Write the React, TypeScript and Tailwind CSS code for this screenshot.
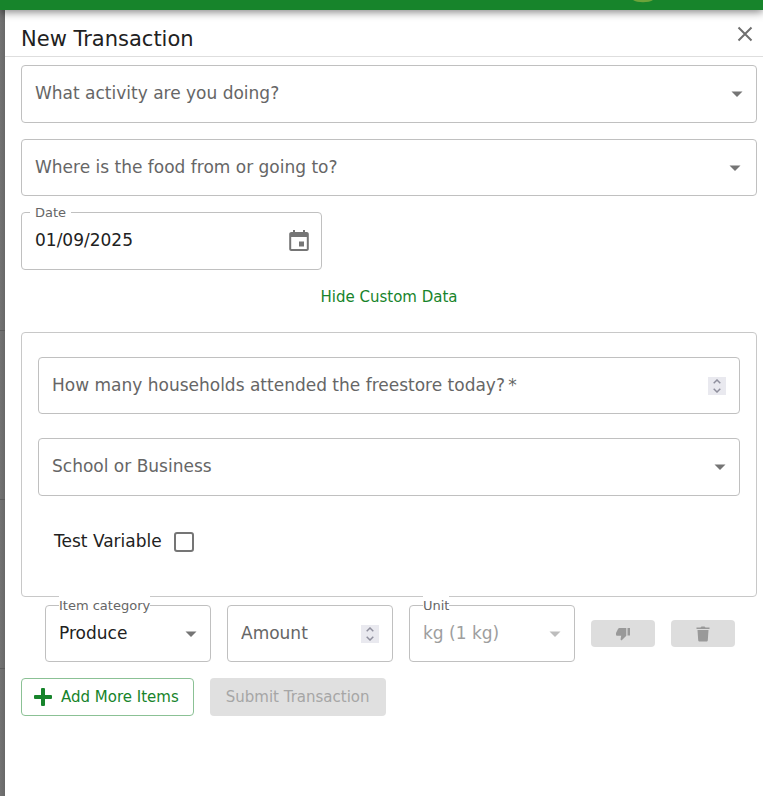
import { useState, type ReactNode } from "react";

function DropArrow() {
  return (
    <svg viewBox="0 0 24 24" className="pointer-events-none col-start-1 row-start-1 size-6 self-center justify-self-end" fill="currentColor" aria-hidden="true">
      <path d="M6.500 9.500l5.500 5.500 5.500-5.500z" />
    </svg>
  );
}

type SelectFieldProps = {
  id: string;
  label: string;
  options: string[];
  box: string;
};

function SelectField({ id, label, options, box }: SelectFieldProps) {
  const [value, setValue] = useState("");
  return (
    <div className={`grid items-center rounded border border-[#c0c0c0] pl-[13px] text-[#757575] ${box}`}>
      {value === "" && (
        <label htmlFor={id} className="col-start-1 row-start-1 truncate pb-[2px] text-[17px] leading-6 text-[#666666]">
          {label}
        </label>
      )}
      <DropArrow />
      <select
        id={id}
        value={value}
        onChange={(e) => setValue(e.target.value)}
        className="col-start-1 row-start-1 h-full w-full appearance-none bg-transparent text-[17px] text-[#212121] outline-none"
      >
        <option value="" />
        {options.map((o) => (
          <option key={o}>{o}</option>
        ))}
      </select>
    </div>
  );
}

function Stepper({ onStep }: { onStep: (by: number) => void }) {
  return (
    <span className="col-start-1 row-start-1 flex h-[18px] w-[18px] flex-col justify-self-end bg-[#e9e9ef] text-[#8f8f9d]">
      <button type="button" aria-label="Increase" onClick={() => onStep(1)} className="flex h-[9px] items-center justify-center">
        <svg width="8" height="5" viewBox="0 0 8 5" fill="none" stroke="currentColor" strokeWidth="1.5">
          <path d="M.7 4.2 4 1l3.300 3.200" />
        </svg>
      </button>
      <button type="button" aria-label="Decrease" onClick={() => onStep(-1)} className="flex h-[9px] items-center justify-center">
        <svg width="8" height="5" viewBox="0 0 8 5" fill="none" stroke="currentColor" strokeWidth="1.5">
          <path d="M.7.8 4 4 7.300.8" />
        </svg>
      </button>
    </span>
  );
}

type NumberFieldProps = {
  id: string;
  label: string;
  required?: boolean;
};

function NumberField({ id, label, required = false }: NumberFieldProps) {
  const [value, setValue] = useState("");
  return (
    <div className="grid h-[57px] min-w-0 items-center rounded border border-[#c0c0c0] px-[13px]">
      {value === "" && (
        <label htmlFor={id} className="col-start-1 row-start-1 truncate pb-[2px] text-[17px] leading-6 text-[#666666]">
          {label}
          {required && <span aria-hidden="true">{"\u2009*"}</span>}
        </label>
      )}
      <input
        id={id}
        type="number"
        required={required}
        value={value}
        onChange={(e) => setValue(e.target.value)}
        className="col-start-1 row-start-1 h-full w-full min-w-0 bg-transparent text-[17px] text-[#212121] outline-none [appearance:textfield]"
      />
      <Stepper onStep={(by) => setValue(String(Number(value) + by))} />
    </div>
  );
}

type OutlinedSelectProps = {
  id: string;
  label: string;
  options: string[];
  disabled?: boolean;
};

function OutlinedSelect({ id, label, options, disabled = false }: OutlinedSelectProps) {
  const tone = disabled ? "text-[#bdbdbd]" : "text-[#757575]";
  return (
    <div className={`relative grid h-[57px] min-w-0 items-center rounded border border-[#c0c0c0] pr-[7px] pl-[13px] ${tone}`}>
      <label htmlFor={id} className="absolute -top-[10px] left-[13px] bg-white text-[13px] leading-5 text-[#666666]">
        {label}
      </label>
      <DropArrow />
      <select
        id={id}
        disabled={disabled}
        className={`col-start-1 row-start-1 h-full w-full appearance-none bg-transparent pr-6 text-[17px] opacity-100 outline-none ${disabled ? "text-[#9e9e9e]" : "text-[#212121]"}`}
      >
        {options.map((o) => (
          <option key={o}>{o}</option>
        ))}
      </select>
    </div>
  );
}

function IconButton({ label, children }: { label: string; children: ReactNode }) {
  return (
    <button type="button" disabled aria-label={label} className="flex h-[27px] items-center justify-center rounded bg-[#dddddd] text-[#999999]">
      {children}
    </button>
  );
}

export default function App() {
  const [open, setOpen] = useState(true);
  const [date, setDate] = useState("01/09/2025");

  return (
    <div className="flex min-h-screen flex-col overflow-hidden bg-white font-['DejaVu_Sans',sans-serif] text-[#212121]">
      <header className="relative z-10 flex h-[10px] items-start bg-[#17842b] pl-[632px] shadow-[0_2px_8px_rgba(0,0,0,0.5)]">
        <svg width="22" height="3" viewBox="0 0 22 3" aria-hidden="true">
          <path d="M1 0h20C17 3 5 3 1 0z" fill="#6da43a" />
        </svg>
      </header>

      <div className="flex flex-1">
        <div className="flex w-[5px] flex-col bg-linear-to-r from-[#737373] to-[#686868]">
          <div className="h-[321px] border-b border-[#5c5c5c]" />
          <div className="h-[169px] border-b border-[#5c5c5c]" />
          <div className="h-[169px] border-b border-[#5c5c5c]" />
        </div>

        <main className="min-w-0 flex-1 bg-white">
          <div className="flex h-[47px] items-center justify-between border-b border-[#dedede] pt-3 pr-[9px] pl-4">
            <h1 className="text-[21px] leading-7">New Transaction</h1>
            <button type="button" aria-label="Close" className="mb-[10px] text-[#6f6f6f]">
              <svg width="18" height="18" viewBox="0 0 18 18" fill="none" stroke="currentColor" strokeWidth="2" aria-hidden="true">
                <path d="M2.500 2.500l13 13M15.500 2.500l-13 13" />
              </svg>
            </button>
          </div>

          <form className="flex flex-col pt-2 pr-[6px] pl-4" onSubmit={(e) => e.preventDefault()}>
            <div className="flex flex-col gap-4">
              <SelectField id="activity" label="What activity are you doing?" options={["Collection", "Distribution"]} box="h-[58px] pr-[7px]" />
              <SelectField id="place" label="Where is the food from or going to?" options={["Freestore", "Warehouse"]} box="h-[57px] pr-[9px]" />
              <div className="relative flex h-[58px] w-[301px] max-w-full items-center rounded border border-[#c0c0c0] pr-[10px] pl-[13px]">
                <label htmlFor="date" className="absolute -top-[10px] left-2 bg-white px-[5px] text-[13px] leading-5 text-[#666666]">
                  Date
                </label>
                <input
                  id="date"
                  type="text"
                  value={date}
                  onChange={(e) => setDate(e.target.value)}
                  className="h-full min-w-0 flex-1 bg-transparent pb-[2px] text-[17px] outline-none"
                />
                <button type="button" aria-label="Choose date" className="text-[#757575]">
                  <svg width="24" height="24" viewBox="0 0 24 24" fill="currentColor" aria-hidden="true">
                    <path d="M17 12.500h-5v5h5v-5zM16 1v2H8V1H6v2H4.500C3.200 3 2.200 3.900 2.200 5v15c0 1.100.9 2 2 2h15.600c1.100 0 2-.9 2-2V5c0-1.100-.9-2-2-2H18V1h-2zm3.800 19H4.200V8h15.600v12z" />
                  </svg>
                </button>
              </div>
            </div>

            <button
              type="button"
              onClick={() => setOpen(!open)}
              className="mt-2 h-[38px] self-center px-2 text-[15px] text-[#17842b]"
            >
              {open ? "Hide Custom Data" : "Show Custom Data"}
            </button>

            {open && (
              <section className="mt-4 flex flex-col gap-6 rounded border border-[#c8c8c8] px-4 pt-6 pb-8">
                <NumberField id="households" label="How many households attended the freestore today?" required />
                <SelectField id="kind" label="School or Business" options={["School", "Business"]} box="h-[58px] pr-[7px]" />
                <label className="flex h-11 items-center gap-3 self-start pl-4 text-[17px]">
                  Test Variable
                  <input
                    type="checkbox"
                    className="size-5 appearance-none rounded-[3px] border-2 border-[#757575] checked:bg-[#17842b]"
                  />
                </label>
              </section>
            )}

            <div className="mt-2 grid grid-cols-[1fr_1fr_1fr_64px_64px] items-center gap-4 pr-[22px] pl-6">
              <OutlinedSelect id="category" label="Item category" options={["Produce", "Dairy", "Bakery"]} />
              <NumberField id="amount" label="Amount" />
              <OutlinedSelect id="unit" label="Unit" options={["kg (1 kg)"]} disabled />
              <IconButton label="Mark as waste">
                <svg width="16" height="16" viewBox="0 0 16 16" fill="currentColor" aria-hidden="true">
                  <path d="M12.500 2H15v7.500h-2.500zM4.500 2h6.800v7.800L6.500 14.500l-1-1 .7-3.700H2.300C1.500 9.800 1 9.200 1 8.500V7l2-4.100C3.300 2.300 3.800 2 4.500 2z" />
                </svg>
              </IconButton>
              <IconButton label="Delete item">
                <svg width="16" height="16" viewBox="0 0 16 16" fill="currentColor" aria-hidden="true">
                  <path d="M1.500 1.500h4l1-1h3l1 1h4v1.500h-13zM2.500 4h11l-.7 10.200c-.1.800-.6 1.300-1.400 1.300H4.600c-.8 0-1.300-.5-1.400-1.300z" />
                </svg>
              </IconButton>
            </div>

            <div className="mt-4 flex gap-4">
              <button type="button" className="flex h-[38px] items-center gap-2 rounded border border-[#8bc195] pr-[14px] pl-[11px] text-[15px] text-[#17842b]">
                <svg width="20" height="20" viewBox="0 0 20 20" fill="currentColor" aria-hidden="true">
                  <path d="M9 1h2q1 0 1 1v6h6q1 0 1 1v2q0 1-1 1h-6v6q0 1-1 1H9q-1 0-1-1v-6H2q-1 0-1-1V9q0-1 1-1h6V2q0-1 1-1z" />
                </svg>
                Add More Items
              </button>
              <button type="submit" disabled className="h-[38px] rounded bg-[#e0e0e0] px-4 text-[15px] text-[#a6a6a6]">
                Submit Transaction
              </button>
            </div>
          </form>
        </main>
      </div>
    </div>
  );
}
